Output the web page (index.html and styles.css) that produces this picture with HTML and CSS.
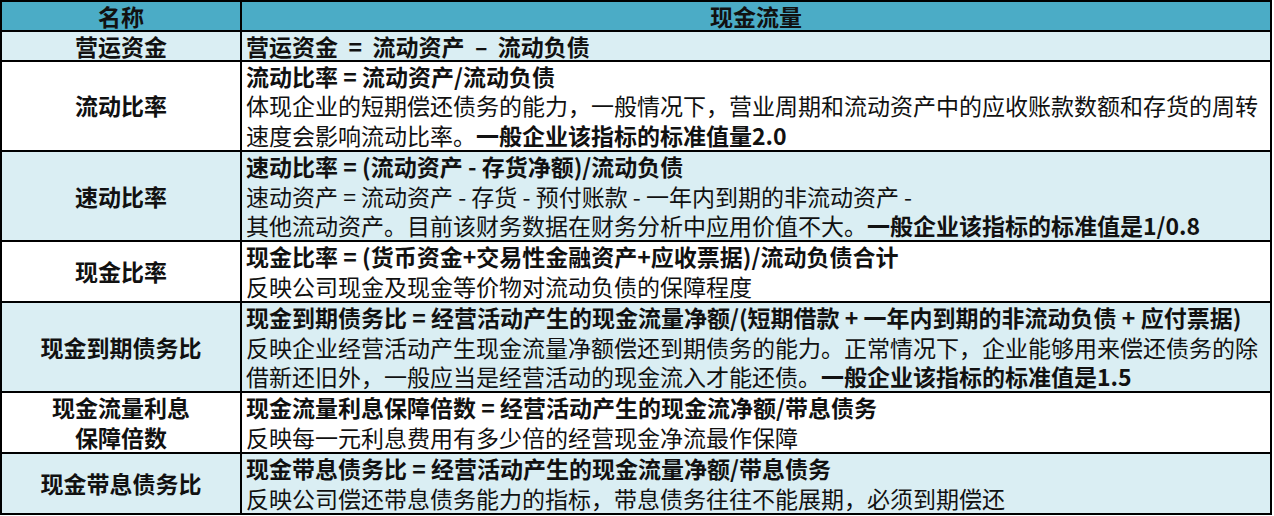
FILE: index.html
```html
<!DOCTYPE html>
<html lang="zh-CN">
<head>
<meta charset="utf-8">
<title>现金流量</title>
<link rel="stylesheet" href="styles.css">
</head>
<body>
<table class="sheet">
  <colgroup><col class="c-name"><col class="c-desc"></colgroup>
  <thead>
    <tr class="head single">
      <th>名称</th>
      <th>现金流量</th>
    </tr>
  </thead>
  <tbody>
    <tr class="blue single">
      <td class="name">营运资金</td>
      <td class="desc b">营运资金&nbsp;&nbsp;=&nbsp;&nbsp;流动资产&nbsp;&nbsp;–&nbsp;&nbsp;流动负债</td>
    </tr>
    <tr class="white">
      <td class="name">流动比率</td>
      <td class="desc"><b>流动比率 = 流动资产/流动负债</b><br>体现企业的短期偿还债务的能力，一般情况下，营业周期和流动资产中的应收账款数额和存货的周转<br>速度会影响流动比率。<b>一般企业该指标的标准值量2.0</b></td>
    </tr>
    <tr class="blue">
      <td class="name">速动比率</td>
      <td class="desc"><b>速动比率 = (流动资产 - 存货净额)/流动负债</b><br>速动资产 = 流动资产 - 存货 - 预付账款 - 一年内到期的非流动资产 -<br>其他流动资产。目前该财务数据在财务分析中应用价值不大。<b>一般企业该指标的标准值是1/0.8</b></td>
    </tr>
    <tr class="white">
      <td class="name">现金比率</td>
      <td class="desc"><b>现金比率 = (货币资金+交易性金融资产+应收票据)/流动负债合计</b><br>反映公司现金及现金等价物对流动负债的保障程度</td>
    </tr>
    <tr class="blue">
      <td class="name">现金到期债务比</td>
      <td class="desc"><b>现金到期债务比 = 经营活动产生的现金流量净额/(短期借款 + 一年内到期的非流动负债 + 应付票据)</b><br>反映企业经营活动产生现金流量净额偿还到期债务的能力。正常情况下，企业能够用来偿还债务的除<br>借新还旧外，一般应当是经营活动的现金流入才能还债。<b>一般企业该指标的标准值是1.5</b></td>
    </tr>
    <tr class="white">
      <td class="name">现金流量利息<br>保障倍数</td>
      <td class="desc"><b>现金流量利息保障倍数 = 经营活动产生的现金流净额/带息债务</b><br>反映每一元利息费用有多少倍的经营现金净流最作保障</td>
    </tr>
    <tr class="blue">
      <td class="name">现金带息债务比</td>
      <td class="desc"><b>现金带息债务比 = 经营活动产生的现金流量净额/带息债务</b><br>反映公司偿还带息债务能力的指标，带息债务往往不能展期，必须到期偿还</td>
    </tr>
  </tbody>
</table>
</body>
</html>
```
FILE: styles.css
```css
html, body {
  margin: 0;
  padding: 0;
  background: #ffffff;
}

body {
  font-family: "Noto Sans CJK SC", "Noto Sans", sans-serif;
  font-size: 23px;
  color: #111111;
}

.sheet {
  border-collapse: collapse;
  width: 1272px;
  table-layout: fixed;
  border: 2px solid #000000;
}

.c-name { width: 240px; }
.c-desc { width: 1030px; }

.sheet th,
.sheet td {
  border: 2px solid #000000;
  padding: 0;
  line-height: 29.4px;
  vertical-align: middle;
  white-space: nowrap;
}

.single th,
.single td {
  line-height: 28px;
}

.head th {
  background: #4bacc6;
  font-weight: 700;
  text-align: center;
}

.blue td { background: #daeef3; }
.white td { background: #ffffff; }

.name {
  font-weight: 700;
  text-align: center;
}

.desc {
  text-align: left;
  padding-left: 4px !important;
  font-weight: 400;
}

.desc.b { font-weight: 700; }

.desc b { font-weight: 700; }
```
